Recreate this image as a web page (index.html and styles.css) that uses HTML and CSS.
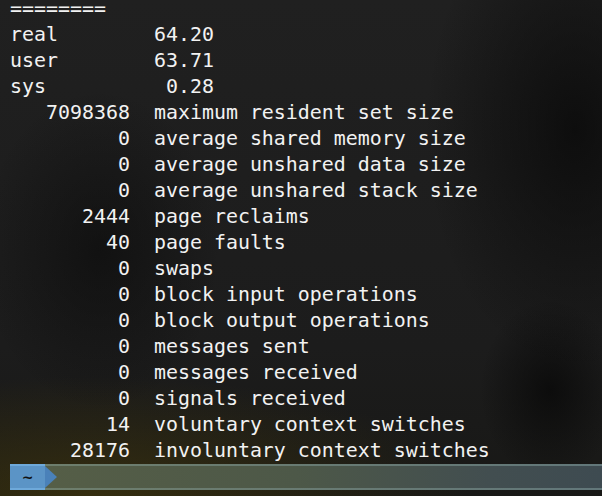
FILE: index.html
```html
<!DOCTYPE html>
<html lang="en">
  <head>
    <meta charset="UTF-8" />
    <meta name="viewport" content="width=device-width, initial-scale=1.0" />
    <title>time -l</title>
    <link rel="stylesheet" href="styles.css">
  </head>
  <body>
    <pre class="output">========
real        64.20
user        63.71
sys          0.28
   7098368  maximum resident set size
         0  average shared memory size
         0  average unshared data size
         0  average unshared stack size
      2444  page reclaims
        40  page faults
         0  swaps
         0  block input operations
         0  block output operations
         0  messages sent
         0  messages received
         0  signals received
        14  voluntary context switches
     28176  involuntary context switches</pre>
    <div class="status">
      <span class="dir">~</span>
      <span class="rest"></span>
    </div>
  </body>
</html>
```

FILE: styles.css
```css
* {
  margin: 0;
  padding: 0;
  box-sizing: border-box;
}
html,
body {
  height: 100%;
}
body {
  overflow: hidden;
  background-color: #1d1d1d;
  background-image:
    radial-gradient(ellipse 150px 240px at 575px 130px, rgba(8, 8, 8, 0.75), rgba(8, 8, 8, 0) 100%),
    radial-gradient(ellipse 70px 90px at 550px 390px, rgba(6, 6, 6, 0.7), rgba(6, 6, 6, 0) 100%),
    radial-gradient(ellipse 120px 160px at 100px 250px, rgba(10, 10, 10, 0.6), rgba(10, 10, 10, 0) 100%),
    radial-gradient(ellipse 380px 120px at 90px 496px, rgba(72, 60, 10, 0.6), rgba(72, 60, 10, 0) 100%),
    linear-gradient(180deg, #202020 0%, #1c1c1c 70%, #181816 100%);
  color: #f2f2f2;
}
.output {
  margin-top: -4px;
  padding-left: 10px;
  font-family: "DejaVu Sans Mono", "Liberation Mono", monospace;
  font-size: 19.93px;
  line-height: 26px;
  white-space: pre;
}
.status {
  display: flex;
  height: 26px;
  margin-left: 10px;
}
.dir {
  width: 35px;
  background: #5b94c6;
  border-top: 2px solid #6ea9da;
  border-bottom: 2px solid #6ea9da;
  color: #111;
  font-family: "DejaVu Sans", sans-serif;
  font-weight: bold;
  font-size: 14px;
  line-height: 22px;
  text-align: center;
}
.rest {
  flex: 1;
  position: relative;
  background: linear-gradient(90deg, #555e47 0%, #4d5848 45%, #424e50 80%, #3e4b51 100%);
  border-top: 2px solid #6c7d6f;
  border-bottom: 2px solid #6c7d6f;
  border-image: linear-gradient(90deg, #6e7e6c, #62777a) 1;
  border-left: 0;
  border-right: 0;
}
.rest::before {
  content: "";
  position: absolute;
  left: 0;
  top: 0;
  border-left: 12px solid #4a81b9;
  border-top: 11px solid transparent;
  border-bottom: 11px solid transparent;
}
```
